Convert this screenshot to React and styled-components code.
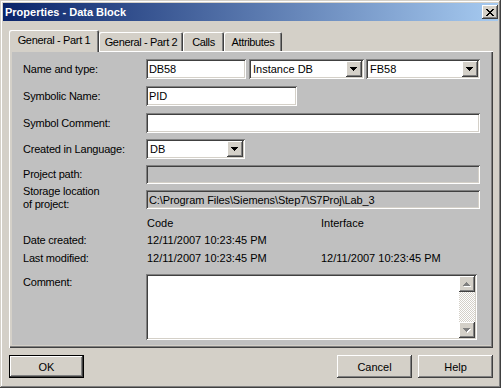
import React from 'react'
import styled, { createGlobalStyle } from 'styled-components'

const GlobalStyle = createGlobalStyle`
  html, body {
    margin: 0;
    padding: 0;
    background: #d4d0c8;
  }
  body {
    font-family: "Liberation Sans", Arial, sans-serif;
    font-size: 11px;
    color: #000;
  }
`

const raised = `
  box-shadow: inset -1px -1px #404040, inset 1px 1px #fff,
    inset -2px -2px #808080, inset 2px 2px #d4d0c8;
`

const sunken = `
  box-shadow: inset 1px 1px #808080, inset -1px -1px #fff,
    inset 2px 2px #404040, inset -2px -2px #d4d0c8;
`

const Window = styled.div`
  width: 501px;
  height: 388px;
  box-sizing: border-box;
  padding: 3px;
  background: #d4d0c8;
  display: flex;
  flex-direction: column;
  box-shadow: inset -1px -1px #404040, inset 1px 1px #d4d0c8,
    inset -2px -2px #808080, inset 2px 2px #fff;
`

const TitleBar = styled.div`
  height: 18px;
  flex: none;
  display: flex;
  align-items: center;
  justify-content: space-between;
  padding-left: 2px;
  background: linear-gradient(90deg, #0a246a, #a6caf0);
`

const TitleText = styled.span`
  color: #fff;
  font-weight: bold;
  font-size: 11px;
`

const CloseButton = styled.div`
  width: 16px;
  height: 14px;
  display: flex;
  align-items: center;
  justify-content: center;
  background: #d4d0c8;
  ${raised}
`

const Body = styled.div`
  flex: 1;
  display: flex;
  flex-direction: column;
  padding: 9px 5px 0 6px;
`

const TabStrip = styled.div`
  height: 22px;
  display: flex;
  align-items: flex-end;
  position: relative;
  z-index: 1;
`

const Tab = styled.div`
  width: ${p => p.$w}px;
  height: ${p => (p.$active ? 22 : 19)}px;
  margin-bottom: ${p => (p.$active ? 0 : 1)}px;
  box-sizing: border-box;
  display: flex;
  align-items: center;
  justify-content: center;
  padding-bottom: ${p => (p.$active ? 2 : 0)}px;
  background: #d4d0c8;
  border-radius: 2px 2px 0 0;
  box-shadow: inset 1px 1px #fff, inset -1px 0 #404040, inset -2px 0 #808080;
  white-space: nowrap;
  letter-spacing: -0.35px;
`

const Panel = styled.div`
  margin-top: -1px;
  height: 297px;
  box-sizing: border-box;
  padding: 1px 2px 3px 3px;
  display: flex;
  box-shadow: inset 1px 1px #fff, inset -1px -1px #404040,
    inset -2px -2px #808080;
`

const Page = styled.div`
  flex: 1;
  background: #c0c0c0;
  padding: 7px 11px 0 11px;
  display: flex;
  flex-direction: column;
`

const Row = styled.div`
  display: flex;
  align-items: ${p => (p.$top ? 'flex-start' : 'center')};
  height: ${p => p.$h}px;
  margin-top: ${p => p.$mt}px;
  gap: ${p => p.$gap || 0}px;
`

const Label = styled.div`
  width: 123px;
  flex: none;
  line-height: 13px;
  letter-spacing: -0.2px;
  padding-top: ${p => p.$pt || 0}px;
  margin-bottom: ${p => p.$lift || 0}px;
`

const Field = styled.div`
  width: ${p => (p.$w ? `${p.$w}px` : 'auto')};
  flex: ${p => (p.$w ? 'none' : 1)};
  height: ${p => p.$h || 20}px;
  box-sizing: border-box;
  padding: 0 3px;
  display: flex;
  align-items: center;
  background: ${p => (p.$disabled ? '#c0c0c0' : '#fff')};
  white-space: nowrap;
  overflow: hidden;
  letter-spacing: -0.1px;
  ${sunken}
`

const Combo = styled.div`
  width: ${p => (p.$w ? `${p.$w}px` : 'auto')};
  flex: ${p => (p.$w ? 'none' : 1)};
  height: 20px;
  box-sizing: border-box;
  padding: 2px;
  display: flex;
  align-items: center;
  background: #fff;
  ${sunken}
`

const ComboText = styled.span`
  flex: 1;
  padding-left: 2px;
  white-space: nowrap;
`

const DropButton = styled.div`
  width: 16px;
  height: 16px;
  flex: none;
  display: flex;
  align-items: center;
  justify-content: center;
  background: #d4d0c8;
  ${raised}
`

const Value = styled.div`
  width: ${p => (p.$w ? `${p.$w}px` : 'auto')};
  padding-left: 1px;
  line-height: 14px;
  white-space: nowrap;
`

const TextArea = styled.div`
  width: 331px;
  height: 66px;
  box-sizing: border-box;
  padding: 2px;
  display: flex;
  justify-content: flex-end;
  background: #fff;
  ${sunken}
`

const ScrollBar = styled.div`
  width: 16px;
  display: flex;
  flex-direction: column;
`

const ScrollButton = styled(DropButton)``

const Track = styled.div`
  flex: 1;
  background-color: #fff;
  background-image: repeating-conic-gradient(#d4d0c8 0% 25%, #fff 0% 50%);
  background-size: 2px 2px;
`

const Footer = styled.div`
  margin-top: 7px;
  display: flex;
  justify-content: space-between;
`

const ButtonGroup = styled.div`
  display: flex;
  gap: 6px;
`

const Button = styled.div`
  width: 75px;
  height: 23px;
  box-sizing: border-box;
  display: flex;
  align-items: center;
  justify-content: center;
  background: #d4d0c8;
  ${p =>
    p.$default
      ? `box-shadow: inset 0 0 0 1px #000, inset -2px -2px #404040, inset 2px 2px #fff,
    inset -3px -3px #808080;`
      : raised}
`

const pixelRects = (rows, fill, dx = 0, dy = 0) =>
  rows.flatMap((row, y) =>
    row.split('').map((c, x) =>
      c === '#' ? (
        <rect key={`${fill}-${x}-${y}`} x={x + dx} y={y + dy} width="1" height="1" fill={fill} />
      ) : null
    )
  )

const CloseGlyph = () => (
  <svg width="8" height="7" viewBox="0 0 8 7" shapeRendering="crispEdges">
    {pixelRects(
      ['##....##', '.##..##.', '..####..', '...##...', '..####..', '.##..##.', '##....##'],
      '#000'
    )}
  </svg>
)

const down = ['#######', '.#####.', '..###..', '...#...']
const up = ['...#...', '..###..', '.#####.', '#######']

const Arrow = ({ dir = 'down', disabled }) => {
  const rows = dir === 'down' ? down : up
  return (
    <svg width="8" height="5" viewBox="0 0 8 5" shapeRendering="crispEdges">
      {disabled && pixelRects(rows, '#fff', 1, 1)}
      {pixelRects(rows, disabled ? '#808080' : '#000')}
    </svg>
  )
}

const ComboBox = ({ w, children }) => (
  <Combo $w={w}>
    <ComboText>{children}</ComboText>
    <DropButton>
      <Arrow />
    </DropButton>
  </Combo>
)

const tabs = [
  { name: 'General - Part 1', w: 90, active: true },
  { name: 'General - Part 2', w: 84 },
  { name: 'Calls', w: 41 },
  { name: 'Attributes', w: 58 },
]

export default function App() {
  return (
    <>
      <GlobalStyle />
      <Window>
        <TitleBar>
          <TitleText>Properties - Data Block</TitleText>
          <CloseButton>
            <CloseGlyph />
          </CloseButton>
        </TitleBar>
        <Body>
          <TabStrip>
            {tabs.map(t => (
              <Tab key={t.name} $w={t.w} $active={t.active}>
                {t.name}
              </Tab>
            ))}
          </TabStrip>
          <Panel>
            <Page>
              <Row $h={20} $mt={0}>
                <Label>Name and type:</Label>
                <Field $w={100}>DB58</Field>
                <Row $h={20} $mt={0} $gap={2} style={{ flex: 1, marginLeft: 3 }}>
                  <ComboBox w={115}>Instance DB</ComboBox>
                  <ComboBox>FB58</ComboBox>
                </Row>
              </Row>
              <Row $h={20} $mt={7}>
                <Label>Symbolic Name:</Label>
                <Field $w={151}>PID</Field>
              </Row>
              <Row $h={20} $mt={7}>
                <Label>Symbol Comment:</Label>
                <Field />
              </Row>
              <Row $h={20} $mt={6}>
                <Label>Created in Language:</Label>
                <ComboBox w={99}>DB</ComboBox>
              </Row>
              <Row $h={19} $mt={6}>
                <Label>Project path:</Label>
                <Field $h={19} $disabled />
              </Row>
              <Row $h={19} $mt={6}>
                <Label $lift={4}>
                  Storage location
                  <br />
                  of project:
                </Label>
                <Field $h={19} $disabled>
                  C:\Program Files\Siemens\Step7\S7Proj\Lab_3
                </Field>
              </Row>
              <Row $h={14} $mt={7}>
                <Label />
                <Value $w={173}>Code</Value>
                <Value>Interface</Value>
              </Row>
              <Row $h={14} $mt={3}>
                <Label>Date created:</Label>
                <Value $w={173}>12/11/2007 10:23:45 PM</Value>
              </Row>
              <Row $h={14} $mt={4}>
                <Label>Last modified:</Label>
                <Value $w={173}>12/11/2007 10:23:45 PM</Value>
                <Value>12/11/2007 10:23:45 PM</Value>
              </Row>
              <Row $h={66} $mt={9} $top>
                <Label $pt={2}>Comment:</Label>
                <TextArea>
                  <ScrollBar>
                    <ScrollButton>
                      <Arrow dir="up" disabled />
                    </ScrollButton>
                    <Track />
                    <ScrollButton>
                      <Arrow disabled />
                    </ScrollButton>
                  </ScrollBar>
                </TextArea>
              </Row>
            </Page>
          </Panel>
          <Footer>
            <Button $default>OK</Button>
            <ButtonGroup>
              <Button>Cancel</Button>
              <Button>Help</Button>
            </ButtonGroup>
          </Footer>
        </Body>
      </Window>
    </>
  )
}
